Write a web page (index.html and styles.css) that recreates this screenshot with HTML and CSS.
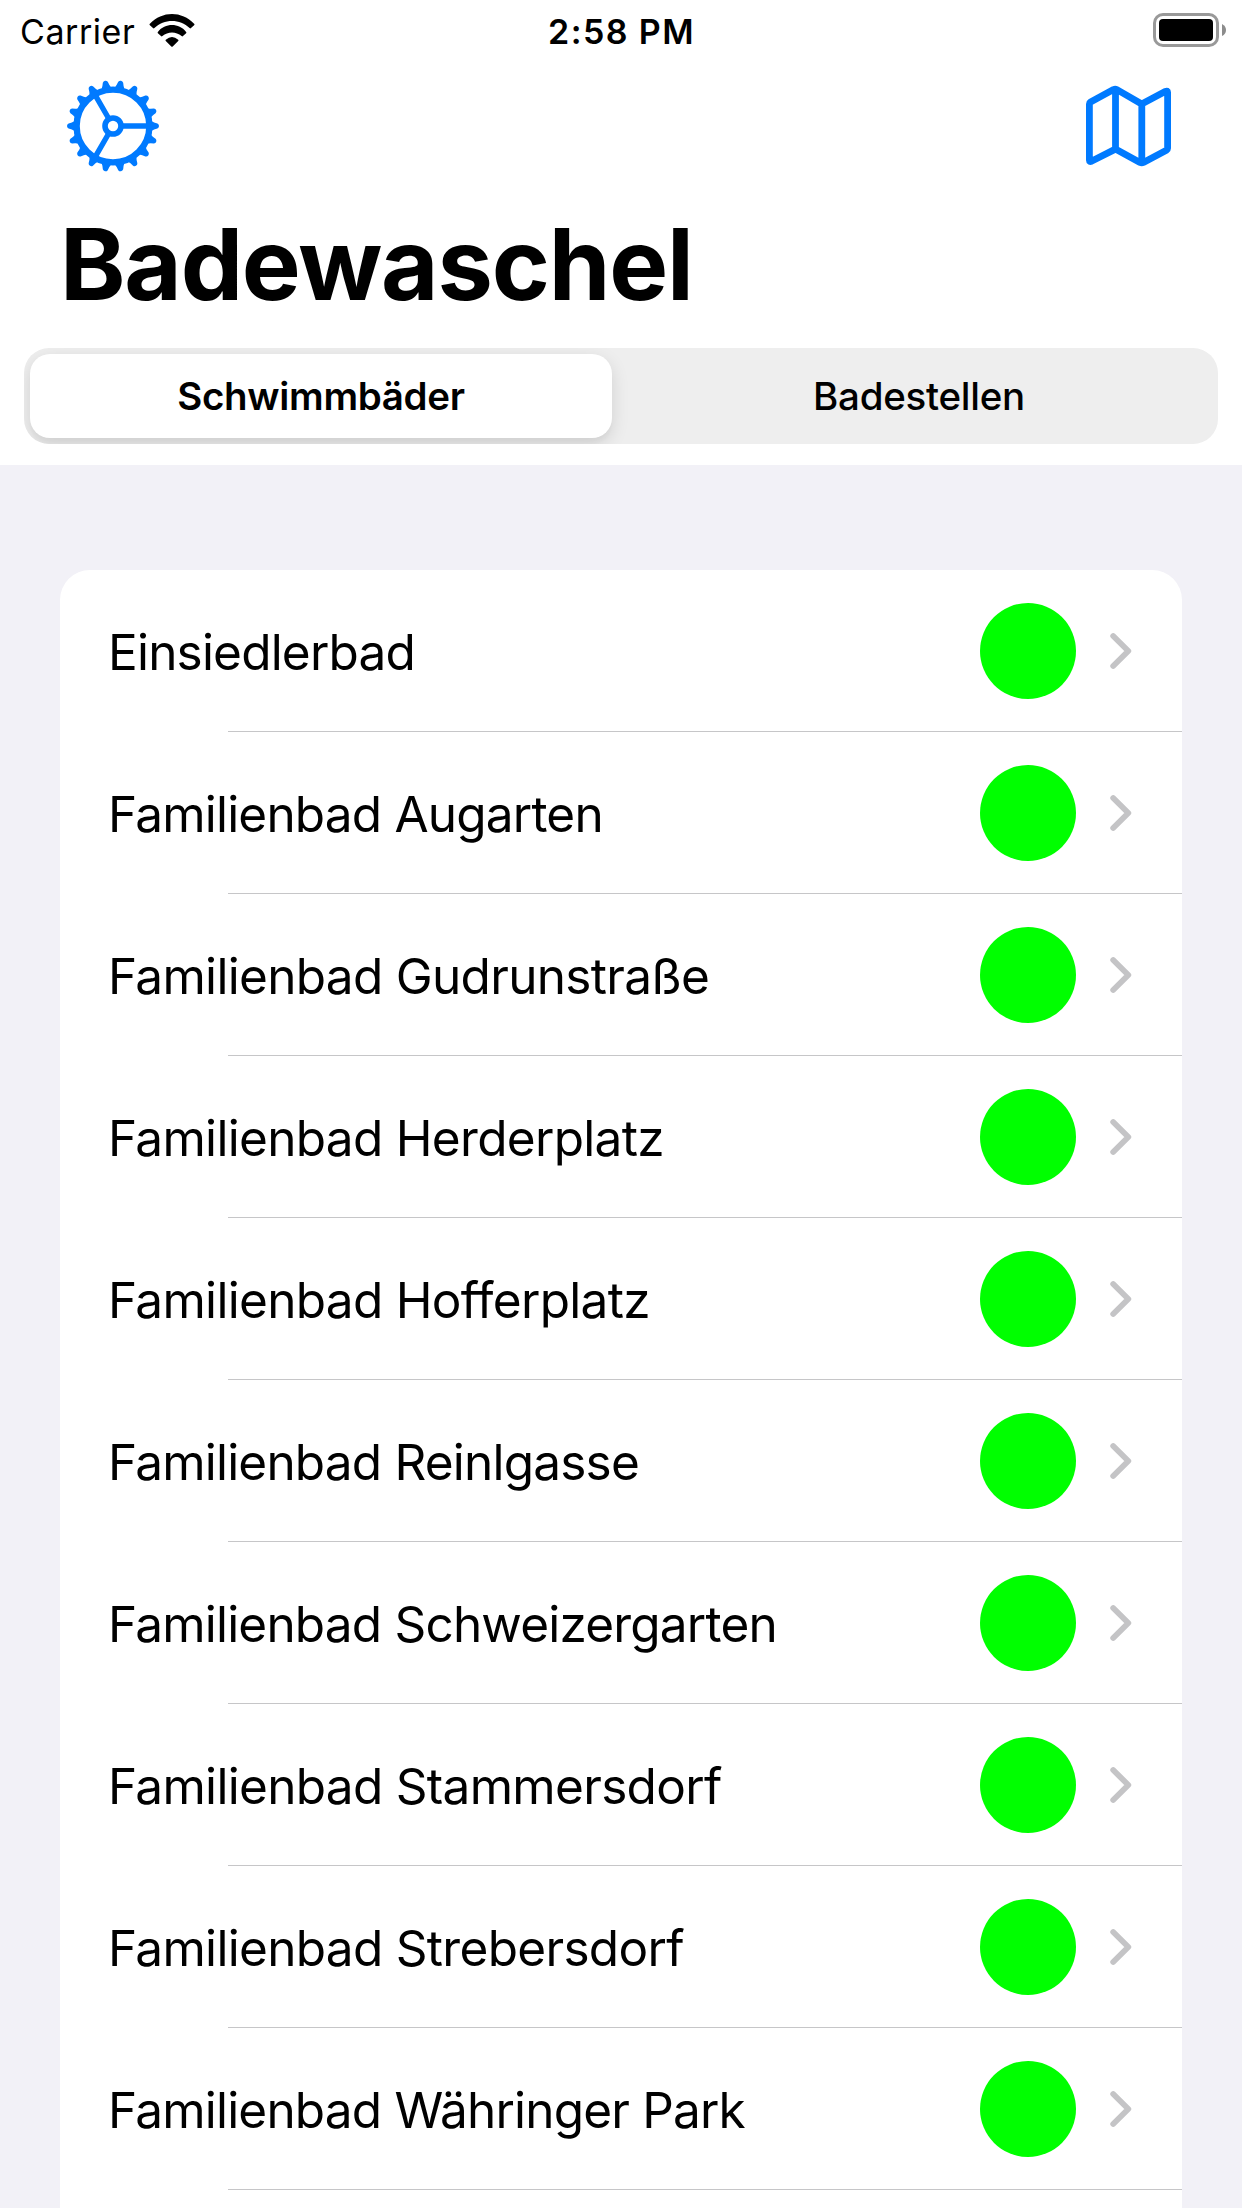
FILE: index.html
```html
<!DOCTYPE html>
<html lang="de">
<head>
<meta charset="utf-8">
<title>Badewaschel</title>
<link rel="stylesheet" href="styles.css">
</head>
<body>
<svg class="defs" aria-hidden="true">
  <symbol id="chevron" viewBox="0 0 22 38"><path d="M3.2 4 18.3 19 3.2 34" fill="none" stroke="#c4c4c6" stroke-width="5.8" stroke-linecap="round" stroke-linejoin="round"/></symbol>
</svg>
<header class="header">
  <div class="status">
    <div class="status-left">
      <span class="carrier">Carrier</span>
      <svg class="wifi" width="46" height="34" viewBox="149 12 46 34">
        <path d="M149.9 22.8C162 9.7 182 9.7 194.1 22.8Q194.9 23.5 194.1 24.2L191 27.1Q190.3 27.7 189.6 27C180 17.6 164 17.6 154.4 27Q153.7 27.7 153 27.1L149.9 24.2Q149.1 23.5 149.9 22.8Z"/>
        <path d="M157.9 30.9C165 21.8 179 21.8 186.1 30.9Q186.8 31.6 186.1 32.2L183 35.1Q182.3 35.7 181.6 35C176 30.2 168 30.2 162.4 35Q161.7 35.7 161 35.1L157.9 32.2Q157.2 31.6 157.9 30.9Z"/>
        <path d="M165.8 38.7Q172 33.2 178.2 38.7Q178.9 39.3 178.2 40L172.7 45.4Q172 46 171.3 45.4L165.8 40Q165.1 39.3 165.8 38.7Z"/>
      </svg>
    </div>
    <span class="clock">2:58 PM</span>
    <svg class="battery" width="74" height="34" viewBox="0 0 74 34">
      <rect x="1.5" y="1.5" width="63" height="31" rx="8.5" fill="none" stroke="#999" stroke-width="3"/>
      <rect x="6" y="6" width="54" height="22" rx="4"/>
      <path d="M69 11Q73 13 73 17T69 23Z" fill="#8c8c8c"/>
    </svg>
  </div>
  <nav class="nav">
    <svg width="94" height="94" viewBox="-47 -47 94 94" fill="none" stroke="#007aff">
      <defs>
        <path id="tooth" d="M37 -4.6L39.4 -4.4Q40.3 -3.6 44.4 -2.5Q46 -1.7 46 0T44.4 2.5Q40.3 3.6 39.4 4.4L37 4.6Z" fill="#007aff" stroke="none"/>
        <g id="teeth3"><use href="#tooth"/><use href="#tooth" transform="rotate(20)"/><use href="#tooth" transform="rotate(40)"/></g>
        <g id="teeth9"><use href="#teeth3"/><use href="#teeth3" transform="rotate(60)"/><use href="#teeth3" transform="rotate(120)"/></g>
      </defs>
      <use href="#teeth9"/><use href="#teeth9" transform="rotate(180)"/>
      <circle r="36.4" stroke-width="6.4"/>
      <circle r="8" stroke-width="5.6"/>
      <path d="M9.5 0H35M-4.75 -8.23-17.5 -30.3M-4.75 8.23-17.5 30.3" stroke-width="5.4"/>
    </svg>
    <svg width="86" height="82" viewBox="1086 85.3 86 82" fill="none" stroke="#007aff" stroke-width="6.8" stroke-linejoin="round" stroke-linecap="round">
      <path d="M1089.4 104.3Q1089.4 102.9 1090.6 102.2L1113.5 89.9Q1115.2 89.2 1116.9 89.9L1141.7 104.3 1165.6 91.6Q1167.6 90.8 1167.6 92.6V148.5Q1167.6 149.8 1166.4 150.5L1143.4 162.8Q1141.7 163.6 1140 162.8L1115.4 149.4 1091.4 161.6Q1089.4 162.4 1089.4 160.6ZM1115.5 90V149M1141.8 104.5V163"/>
    </svg>
  </nav>
  <h1 class="title">Badewaschel</h1>
  <div class="segments">
    <div class="segment segment-active">Schwimmbäder</div>
    <div class="segment">Badestellen</div>
  </div>
</header>
<main>
  <ul class="list">
    <li class="row"><span class="name">Einsiedlerbad</span><i class="dot"></i><svg class="chevron"><use href="#chevron"/></svg></li>
    <li class="row"><span class="name">Familienbad Augarten</span><i class="dot"></i><svg class="chevron"><use href="#chevron"/></svg></li>
    <li class="row"><span class="name name-loose">Familienbad Gudrunstraße</span><i class="dot"></i><svg class="chevron"><use href="#chevron"/></svg></li>
    <li class="row"><span class="name name-loose">Familienbad Herderplatz</span><i class="dot"></i><svg class="chevron"><use href="#chevron"/></svg></li>
    <li class="row"><span class="name name-loose">Familienbad Hofferplatz</span><i class="dot"></i><svg class="chevron"><use href="#chevron"/></svg></li>
    <li class="row"><span class="name">Familienbad Reinlgasse</span><i class="dot"></i><svg class="chevron"><use href="#chevron"/></svg></li>
    <li class="row"><span class="name">Familienbad Schweizergarten</span><i class="dot"></i><svg class="chevron"><use href="#chevron"/></svg></li>
    <li class="row"><span class="name name-loose">Familienbad Stammersdorf</span><i class="dot"></i><svg class="chevron"><use href="#chevron"/></svg></li>
    <li class="row"><span class="name name-loose">Familienbad Strebersdorf</span><i class="dot"></i><svg class="chevron"><use href="#chevron"/></svg></li>
    <li class="row"><span class="name">Familienbad Währinger Park</span><i class="dot"></i><svg class="chevron"><use href="#chevron"/></svg></li>
  </ul>
</main>
</body>
</html>
```
FILE: styles.css
```css
* { box-sizing: border-box; }

body {
  margin: 0;
  height: 2208px;
  overflow: hidden;
  display: flex;
  flex-direction: column;
  background: #f2f1f7;
  color: #000;
  font-family: Inter, "Liberation Sans", sans-serif;
  font-feature-settings: "calt" 0, "liga" 0;
}

.defs { display: none; }

.header {
  flex: none;
  height: 465px;
  background: #fff;
}

.status {
  display: grid;
  grid-template-columns: 1fr auto 1fr;
  align-items: center;
  height: 60px;
  padding: 0 15px 0 20px;
  font-size: 34px;
  line-height: 40px;
}

.status-left {
  display: flex;
  align-items: center;
  gap: 14px;
}

.carrier {
  padding-top: 3px;
  letter-spacing: 0.56px;
}

.wifi { margin-top: -1px; }

.clock {
  padding: 3px 4px 0 0;
  font-weight: 600;
  letter-spacing: 1.4px;
}

.battery { justify-self: end; }

.nav {
  display: flex;
  align-items: center;
  justify-content: space-between;
  height: 132px;
  padding: 0 70px 0 66px;
}

.title {
  margin: 0 0 12px;
  padding-left: 60px;
  font-size: 99px;
  line-height: 144px;
  font-weight: 700;
  letter-spacing: -1.17px;
}

.segments {
  display: grid;
  grid-template-columns: 582px 1fr;
  gap: 6px;
  height: 96px;
  margin: 0 24px;
  padding: 6px;
  overflow: hidden;
  border-radius: 25px;
  background: #eee;
}

.segment {
  padding-left: 8px;
  border-radius: 20px;
  font-size: 38.5px;
  line-height: 84px;
  font-weight: 500;
  letter-spacing: -0.27px;
  text-align: center;
}

.segment-active {
  padding-left: 0;
  background: #fff;
  box-shadow: 0 6px 18px rgba(0, 0, 0, 0.12), 0 6px 2px rgba(0, 0, 0, 0.02);
  font-weight: 600;
  letter-spacing: -0.33px;
}

.list {
  margin: 105px 60px 0;
  padding: 0;
  height: 1700px;
  list-style: none;
  background: #fff;
  border-radius: 30px;
}

.row {
  display: flex;
  align-items: center;
  height: 162px;
  padding: 0 50px 0 48px;
  background: linear-gradient(#c6c6c8, #c6c6c8) 168px 161px / 100% 1px no-repeat;
}

.name {
  flex: 1;
  padding-top: 2px;
  font-size: 49.5px;
  line-height: 60px;
  letter-spacing: -0.8px;
}

.name-loose { letter-spacing: -0.69px; }

.dot {
  width: 96px;
  height: 96px;
  margin-right: 34px;
  border-radius: 50%;
  background: #0f0;
}

.chevron {
  width: 22px;
  height: 38px;
}
```
